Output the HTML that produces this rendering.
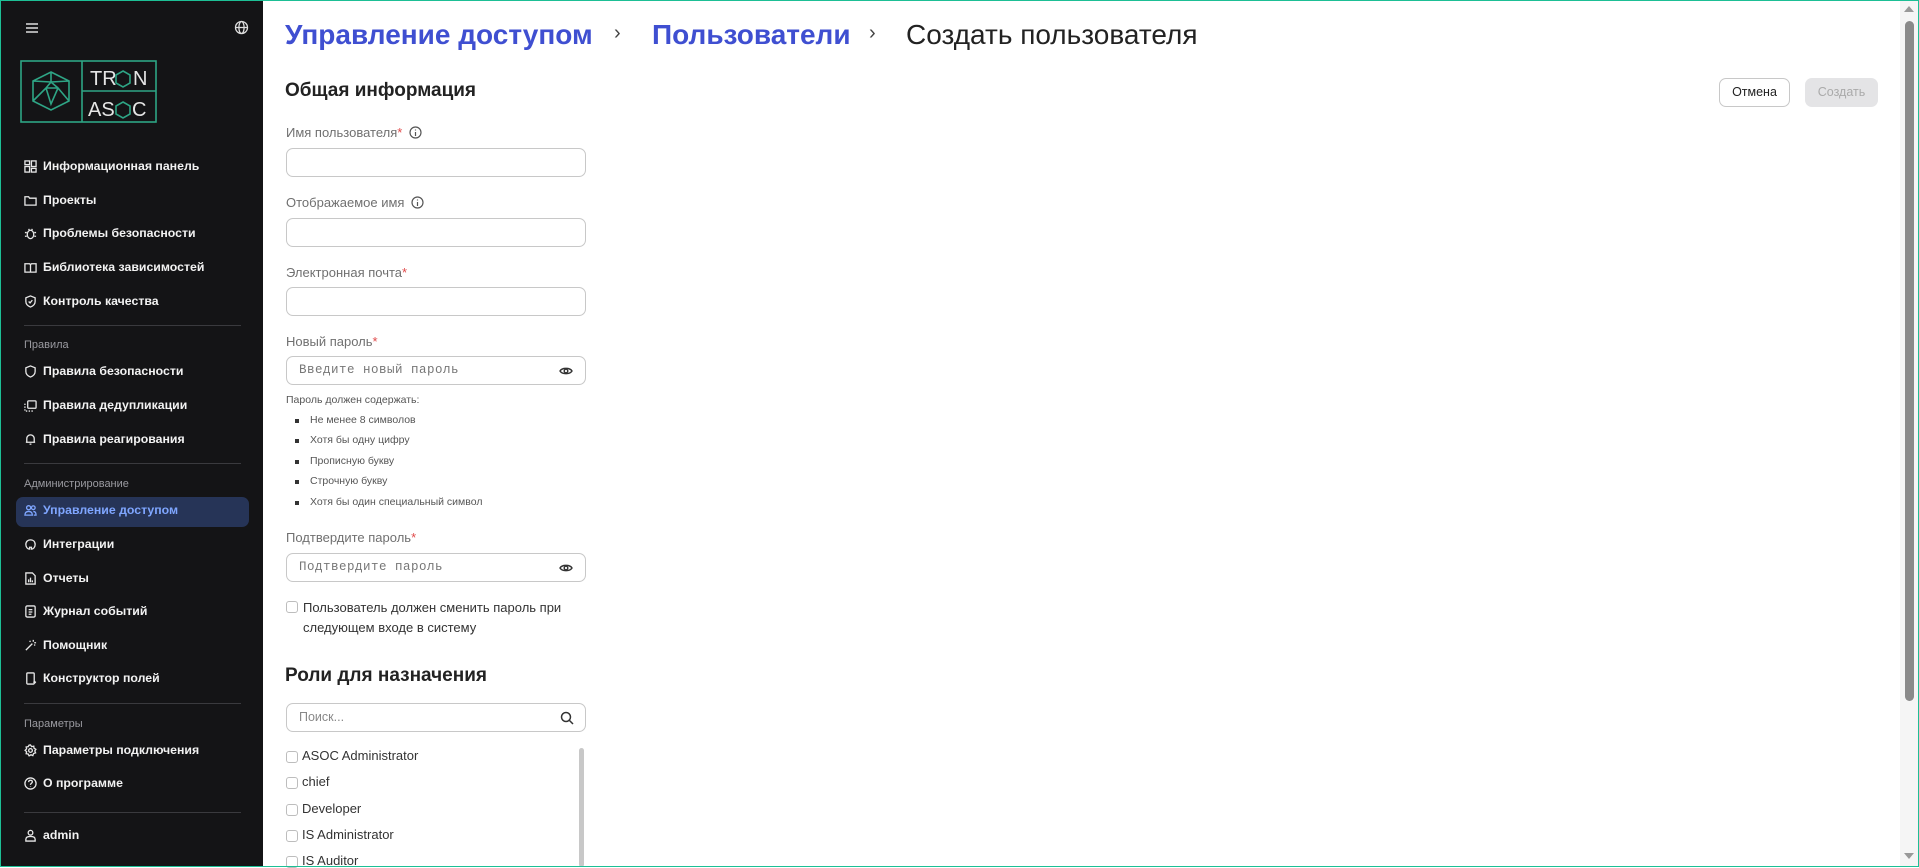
<!DOCTYPE html>
<html><head><meta charset="utf-8"><style>
*{box-sizing:border-box;margin:0;padding:0}
body{width:1919px;height:867px;overflow:hidden;font-family:"Liberation Sans",sans-serif;background:#fff;position:relative}
.frame{position:absolute;inset:0;border:1px solid #1dbf95;pointer-events:none;z-index:10}
.sb{position:absolute;left:0;top:0;width:263px;height:867px;background:#141416;color:#f2f2f2}
.it{position:absolute;left:24px;font-size:12.3px;font-weight:bold;display:flex;align-items:center;gap:6px;white-space:nowrap}
.it svg{width:13px;height:13px;fill:none;stroke:#e8e8e8;stroke-width:1.4}
.sec{position:absolute;left:24px;font-size:11px;color:#9a9aa0}
.div{position:absolute;left:24px;width:217px;height:1px;background:#3a3a3e}
.act{position:absolute;left:16px;top:497px;width:233px;height:30px;background:#263457;border-radius:7px}
.a{position:absolute;white-space:nowrap}
.lbl{font-size:13px;color:#707070}
.lbl i{color:#e04a4a;font-style:normal}
.inp{position:absolute;left:286px;width:300px;height:29px;border:1px solid #c8c8c8;border-radius:7px}
.ph{font-family:"Liberation Mono",monospace;font-size:12.5px;color:#777;position:absolute;left:12px;top:6px;letter-spacing:.5px}
.eye{position:absolute;right:12px;top:8px}
.bul{font-size:10.5px;color:#555;left:310px}
.sq{position:absolute;left:295px;width:4px;height:4px;background:#333}
.cb{position:absolute;left:286px;width:12px;height:12px;border:1px solid #bdbdbd;border-radius:3px}
.role{font-size:13px;color:#333;left:302px}
</style></head><body>
<div class="frame"></div>
<div class="sb">
<svg style="position:absolute;left:25px;top:22px" width="14" height="12"><path d="M1 2H13M1 6H13M1 10H13" stroke="#ddd" stroke-width="1.5"/></svg>
<svg style="position:absolute;left:234px;top:20px" width="15" height="15" fill="none" stroke="#ddd" stroke-width="1.3"><circle cx="7.5" cy="7.5" r="6"/><ellipse cx="7.5" cy="7.5" rx="2.6" ry="6"/><path d="M1.5 7.5H13.5"/></svg>
<svg style="position:absolute;left:20px;top:60px" width="137" height="63" fill="none" stroke="#2ea585" stroke-width="1.6">
<rect x="1" y="1" width="135" height="61"/><path d="M62 1V62M62 31H136"/>
<path d="M31 12L49 21V41L31 50L13 41V21Z M31 12V22 M13 21L31 22L49 21 M13 41L26 28L31 44L38 28L49 41 M26 28H38 M31 22L26 28 M31 22L38 28"/>
<text x="70" y="25" fill="#e5e5e5" stroke="none" font-size="20" font-family="Liberation Sans">TR</text><polygon points="103,11 110,15 110,23 103,27 96,23 96,15"/><text x="113" y="25" fill="#e5e5e5" stroke="none" font-size="20" font-family="Liberation Sans">N</text>
<text x="68" y="56" fill="#e5e5e5" stroke="none" font-size="20" font-family="Liberation Sans">AS</text><polygon points="103,42 110,46 110,54 103,58 96,54 96,46"/><text x="112" y="56" fill="#e5e5e5" stroke="none" font-size="20" font-family="Liberation Sans">C</text>
</svg>
<div class="it" style="top:159px"><svg viewBox="0 0 14 14"><rect x="1" y="1" width="5" height="4"/><rect x="8" y="1" width="5" height="6"/><rect x="1" y="7" width="5" height="6"/><rect x="8" y="9" width="5" height="4"/></svg>Информационная панель</div>
<div class="it" style="top:193px"><svg viewBox="0 0 14 14"><path d="M1 3H5L6 4.5H13V12H1Z"/></svg>Проекты</div>
<div class="it" style="top:226px"><svg viewBox="0 0 14 14"><ellipse cx="7" cy="8" rx="3.5" ry="4.5"/><path d="M1 6H3M11 6H13M1 10H3M11 10H13M5 2L6 4M9 2L8 4"/></svg>Проблемы безопасности</div>
<div class="it" style="top:260px"><svg viewBox="0 0 14 14"><path d="M1 3H6L7 4L8 3H13V12H1ZM7 4V12"/></svg>Библиотека зависимостей</div>
<div class="it" style="top:294px"><svg viewBox="0 0 14 14"><path d="M7 1L12 3V7C12 10 9.5 12 7 13C4.5 12 2 10 2 7V3Z M5 7L6.5 8.5L9 5.5"/></svg>Контроль качества</div>
<div class="div" style="top:325px"></div>
<div class="sec" style="top:339px">Правила</div>
<div class="it" style="top:364px"><svg viewBox="0 0 14 14"><path d="M7 1L12 3V7C12 10 9.5 12 7 13C4.5 12 2 10 2 7V3Z"/></svg>Правила безопасности</div>
<div class="it" style="top:398px"><svg viewBox="0 0 14 14"><rect x="4" y="2" width="9" height="8" rx="1"/><path d="M1 5V13H10" stroke-dasharray="1.5 1.5"/></svg>Правила дедупликации</div>
<div class="it" style="top:432px"><svg viewBox="0 0 14 14"><path d="M3 10V6C3 3.5 5 2 7 2C9 2 11 3.5 11 6V10H12H2M6 12H8"/></svg>Правила реагирования</div>
<div class="div" style="top:463px"></div>
<div class="sec" style="top:478px">Администрирование</div>
<div class="act"></div>
<div class="it" style="top:503px;color:#7fa6ff"><svg viewBox="0 0 14 14" style="stroke:#7fa6ff"><circle cx="5" cy="4" r="2.2"/><circle cx="10" cy="4" r="2"/><path d="M1 12C1 9 3 8 5 8C7 8 9 9 9 12ZM10 8C12 8 13 9.5 13 12H10.5"/></svg>Управление доступом</div>
<div class="it" style="top:537px"><svg viewBox="0 0 14 14"><path d="M2 7C2 4 4 2 7 2C10 2 12 4 12 7C12 10 10 12 8 12V10H6V12C4 12 2 10 2 7Z"/></svg>Интеграции</div>
<div class="it" style="top:571px"><svg viewBox="0 0 14 14"><path d="M2 1H9L12 4V13H2ZM5 11V8M7 11V6M9 11V9"/></svg>Отчеты</div>
<div class="it" style="top:604px"><svg viewBox="0 0 14 14"><rect x="2" y="1" width="10" height="12" rx="1.5"/><path d="M5 5H9M5 7.5H9M5 10H8"/></svg>Журнал событий</div>
<div class="it" style="top:638px"><svg viewBox="0 0 14 14"><path d="M2 12L9 5M10 1V3M13 4H11M12 7L11 6M6 2L7 3"/></svg>Помощник</div>
<div class="it" style="top:671px"><svg viewBox="0 0 14 14"><rect x="3" y="1" width="8" height="12" rx="1"/><path d="M10 11H13M11.5 9.5V12.5"/></svg>Конструктор полей</div>
<div class="div" style="top:703px"></div>
<div class="sec" style="top:718px">Параметры</div>
<div class="it" style="top:743px"><svg viewBox="0 0 14 14"><circle cx="7" cy="7" r="2"/><path d="M7 1L8.2 2.8L10.5 2.3L10.8 4.5L12.8 5.7L11.6 7.5L12.5 9.5L10.3 10.3L9.5 12.5L7.5 11.6L5.5 12.8L4.5 10.8L2.3 10.5L2.8 8.2L1.2 6.8L2.8 5.2L2.3 3.2L4.5 2.8L5.5 1.2Z"/></svg>Параметры подключения</div>
<div class="it" style="top:776px"><svg viewBox="0 0 14 14"><circle cx="7" cy="7" r="6"/><path d="M5 5.5C5 4 6 3.5 7 3.5C8 3.5 9 4 9 5.3C9 6.8 7 6.8 7 8.5M7 10V10.5"/></svg>О программе</div>
<div class="div" style="top:812px"></div>
<div class="it" style="top:828px"><svg viewBox="0 0 14 14"><circle cx="7" cy="4" r="2.5"/><path d="M2 13V11C2 9 4 8 7 8C10 8 12 9 12 11V13Z"/></svg>admin</div>
</div>

<div class="a" style="left:285px;top:19px;font-size:28px;font-weight:bold;color:#3f4fd1">Управление доступом</div>
<div class="a" style="left:614px;top:22px;font-size:20px;color:#444">›</div>
<div class="a" style="left:652px;top:19px;font-size:28px;font-weight:bold;color:#3f4fd1">Пользователи</div>
<div class="a" style="left:869px;top:22px;font-size:20px;color:#444">›</div>
<div class="a" style="left:906px;top:19px;font-size:28px;color:#222">Создать пользователя</div>

<div class="a" style="left:1719px;top:78px;width:71px;height:29px;border:1px solid #c8c8c8;border-radius:7px;font-size:12.5px;color:#222;text-align:center;line-height:27px">Отмена</div>
<div class="a" style="left:1805px;top:78px;width:73px;height:29px;background:#e4e4e6;border-radius:7px;font-size:12.5px;color:#aaa;text-align:center;line-height:29px">Создать</div>

<div class="a" style="left:285px;top:80px;font-size:19px;font-weight:bold;color:#222">Общая информация</div>

<div class="a lbl" style="left:286px;top:125px">Имя пользователя<i>*</i> <svg width="13" height="13" style="vertical-align:-2px;margin-left:3px" fill="none" stroke="#555" stroke-width="1.2"><circle cx="6.5" cy="6.5" r="5.5"/><path d="M6.5 6V10M6.5 3.5V4.5"/></svg></div>
<div class="inp" style="top:148px"></div>
<div class="a lbl" style="left:286px;top:195px">Отображаемое имя <svg width="13" height="13" style="vertical-align:-2px;margin-left:3px" fill="none" stroke="#555" stroke-width="1.2"><circle cx="6.5" cy="6.5" r="5.5"/><path d="M6.5 6V10M6.5 3.5V4.5"/></svg></div>
<div class="inp" style="top:218px"></div>
<div class="a lbl" style="left:286px;top:265px">Электронная почта<i>*</i></div>
<div class="inp" style="top:287px"></div>
<div class="a lbl" style="left:286px;top:334px">Новый пароль<i>*</i></div>
<div class="inp" style="top:356px"><span class="ph">Введите новый пароль</span><svg class="eye" width="14" height="12" fill="none" stroke="#333" stroke-width="1.4"><path d="M1 6C3 2.5 11 2.5 13 6C11 9.5 3 9.5 1 6Z"/><circle cx="7" cy="6" r="1.8"/></svg></div>
<div class="a" style="left:286px;top:394px;font-size:10.5px;color:#555">Пароль должен содержать:</div>
<div class="sq" style="top:419px"></div><div class="a bul" style="top:414px">Не менее 8 символов</div>
<div class="sq" style="top:439px"></div><div class="a bul" style="top:434px">Хотя бы одну цифру</div>
<div class="sq" style="top:460px"></div><div class="a bul" style="top:455px">Прописную букву</div>
<div class="sq" style="top:480px"></div><div class="a bul" style="top:475px">Строчную букву</div>
<div class="sq" style="top:501px"></div><div class="a bul" style="top:496px">Хотя бы один специальный символ</div>
<div class="a lbl" style="left:286px;top:530px">Подтвердите пароль<i>*</i></div>
<div class="inp" style="top:553px"><span class="ph">Подтвердите пароль</span><svg class="eye" width="14" height="12" fill="none" stroke="#333" stroke-width="1.4"><path d="M1 6C3 2.5 11 2.5 13 6C11 9.5 3 9.5 1 6Z"/><circle cx="7" cy="6" r="1.8"/></svg></div>
<div class="cb" style="top:601px"></div>
<div class="a" style="left:303px;top:598px;font-size:13px;color:#333;line-height:20px">Пользователь должен сменить пароль при<br>следующем входе в систему</div>

<div class="a" style="left:285px;top:665px;font-size:19px;font-weight:bold;color:#222">Роли для назначения</div>
<div class="inp" style="top:703px"><span style="position:absolute;left:12px;top:6px;font-size:12.5px;color:#888">Поиск...</span><svg style="position:absolute;right:11px;top:7px" width="14" height="14" fill="none" stroke="#333" stroke-width="1.5"><circle cx="6" cy="6" r="4.5"/><path d="M9.5 9.5L13 13"/></svg></div>
<div class="a" style="left:579px;top:748px;width:5px;height:119px;background:#c8c8c8;border-radius:3px"></div>
<div class="cb" style="top:751px"></div><div class="a role" style="top:748px">ASOC Administrator</div>
<div class="cb" style="top:777px"></div><div class="a role" style="top:774px">chief</div>
<div class="cb" style="top:804px"></div><div class="a role" style="top:801px">Developer</div>
<div class="cb" style="top:830px"></div><div class="a role" style="top:827px">IS Administrator</div>
<div class="cb" style="top:856px"></div><div class="a role" style="top:853px">IS Auditor</div>

<div class="a" style="left:1900px;top:0;width:18px;height:867px;background:#f5f5f5"></div>
<svg class="a" style="left:1903px;top:5px" width="12" height="8"><path d="M1 7L6 1L11 7Z" fill="#999"/></svg>
<div class="a" style="left:1905px;top:21px;width:9px;height:680px;background:#8a8a8a;border-radius:5px"></div>
<svg class="a" style="left:1903px;top:852px" width="12" height="8"><path d="M1 1L6 7L11 1Z" fill="#999"/></svg>
</body></html>
